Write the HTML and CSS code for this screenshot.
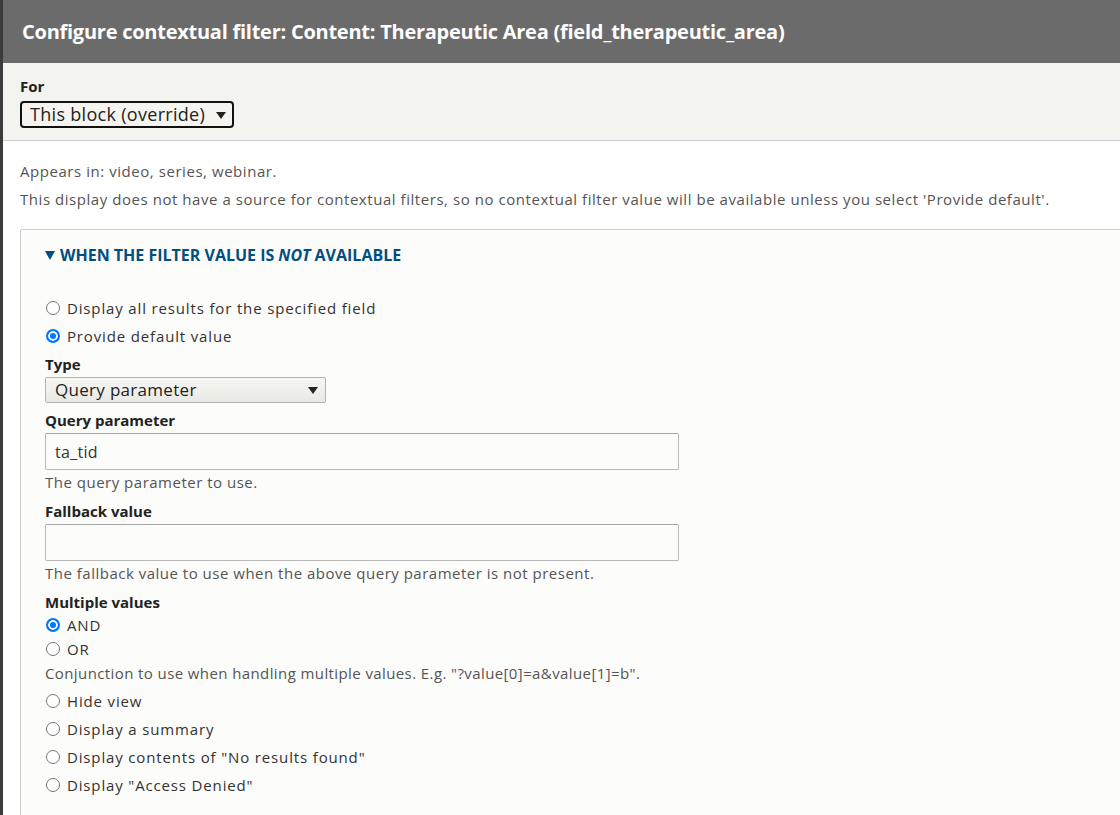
FILE: index.html
```html
<!DOCTYPE html>
<html lang="en">
<head>
<meta charset="utf-8">
<title>Configure contextual filter</title>
<link rel="stylesheet" href="styles.css">
</head>
<body>
<div class="dialog">
  <header class="titlebar">
    <h1 class="title">Configure contextual filter: Content: Therapeutic Area (field_therapeutic_area)</h1>
  </header>
  <div class="for-bar">
    <label class="label" for="override">For</label>
    <div class="select-wrap select-for">
      <select id="override" class="select select-dark"><option>This block (override)</option></select>
      <span class="caret"></span>
    </div>
  </div>
  <div class="content">
    <p class="text">Appears in: video, series, webinar.</p>
    <p class="text text-second">This display does not have a source for contextual filters, so no contextual filter value will be available unless you select 'Provide default'.</p>
    <div class="details">
      <div class="summary"><span class="summary-caret"></span>WHEN THE FILTER VALUE IS <em>NOT</em> AVAILABLE</div>
      <div class="details-body">
        <label class="radio-row"><input type="radio" name="default" class="radio"> Display all results for the specified field</label>
        <label class="radio-row"><input type="radio" name="default" class="radio" checked> Provide default value</label>
        <div class="field">
          <label class="label" for="type">Type</label>
          <div class="select-wrap select-type">
            <select id="type" class="select select-light"><option>Query parameter</option></select>
            <span class="caret"></span>
          </div>
        </div>
        <div class="field field-input">
          <label class="label" for="qp">Query parameter</label>
          <input id="qp" class="input" type="text" value="ta_tid">
          <div class="desc">The query parameter to use.</div>
        </div>
        <div class="field field-input field-fallback">
          <label class="label" for="fb">Fallback value</label>
          <input id="fb" class="input" type="text" value="">
          <div class="desc">The fallback value to use when the above query parameter is not present.</div>
        </div>
        <div class="field field-multi">
          <div class="label">Multiple values</div>
          <label class="radio-row radio-row-small"><input type="radio" name="multi" class="radio" checked> AND</label>
          <label class="radio-row radio-row-small"><input type="radio" name="multi" class="radio"> OR</label>
          <div class="desc desc-conj">Conjunction to use when handling multiple values. E.g. "?value[0]=a&amp;value[1]=b".</div>
        </div>
        <div class="actions">
          <label class="radio-row"><input type="radio" name="action" class="radio"> Hide view</label>
          <label class="radio-row"><input type="radio" name="action" class="radio"> Display a summary</label>
          <label class="radio-row"><input type="radio" name="action" class="radio"> Display contents of "No results found"</label>
          <label class="radio-row"><input type="radio" name="action" class="radio"> Display "Access Denied"</label>
        </div>
      </div>
    </div>
  </div>
</div>
</body>
</html>
```

FILE: styles.css
```css
html, body {
  margin: 0;
  padding: 0;
  height: 100%;
  overflow: hidden;
}
body {
  background: #3b3b3b;
  font-family: "Open Sans", "DejaVu Sans", sans-serif;
  font-size: 15px;
  color: #555;
}
.dialog {
  margin-left: 3px;
  height: 100%;
  background: #fff;
  overflow: hidden;
}
.titlebar {
  height: 63px;
  background: #6b6b6b;
  display: flex;
  align-items: center;
  padding-left: 19px;
}
.title {
  margin: 0;
  color: #fff;
  font-size: 20px;
  font-weight: 700;
  letter-spacing: -0.25px;
}
.for-bar {
  background: #f3f3ef;
  border-bottom: 1px solid #cfcfcf;
  padding: 13px 0 12px 17px;
}
.label {
  display: block;
  font-weight: 700;
  font-size: 15px;
  line-height: 20px;
  color: #222;
}
.for-bar .label {
  margin-bottom: 5px;
}
.select-wrap {
  position: relative;
}
.select {
  appearance: none;
  -webkit-appearance: none;
  font-family: inherit;
  margin: 0;
  display: block;
  width: 100%;
  box-sizing: border-box;
  cursor: pointer;
}
.select-for {
  width: 214px;
}
.select-dark {
  height: 27px;
  border: 2px solid #111;
  border-radius: 4px;
  background: #f5f4ef;
  color: #222;
  font-size: 18px;
  letter-spacing: 0.3px;
  padding: 0 0 0 8px;
  line-height: 23px;
}
.select-type {
  width: 281px;
}
.select-light {
  height: 26px;
  border: 1px solid #b3b3b3;
  border-radius: 2px;
  background: linear-gradient(#f6f6f3, #e9e9e4);
  color: #222;
  font-size: 17px;
  letter-spacing: 0.3px;
  padding: 0 0 0 9px;
  line-height: 24px;
}
.caret {
  position: absolute;
  top: 50%;
  right: 8px;
  margin-top: -3px;
  width: 0;
  height: 0;
  border-left: 5px solid transparent;
  border-right: 5px solid transparent;
  border-top: 7px solid #222;
  pointer-events: none;
}
.select-type .caret {
  right: 8px;
}
.content {
  padding: 20px 0 0 17px;
}
.text {
  margin: 0;
  line-height: 20px;
  font-size: 15px;
  letter-spacing: 0.55px;
  color: #555;
}
.text-second {
  margin-top: 8px;
}
.details {
  margin-top: 20px;
  margin-right: -40px;
  border: 1px solid #cccccc;
  border-radius: 2px;
  background: #fcfcfa;
  min-height: 700px;
}
.summary {
  padding: 15px 0 0 24px;
  line-height: 20px;
  font-size: 16px;
  font-weight: 700;
  color: #004f80;
  display: flex;
  align-items: center;
}
.summary em {
  font-style: italic;
  margin: 0 4px;
}
.summary-caret {
  width: 0;
  height: 0;
  border-left: 5px solid transparent;
  border-right: 5px solid transparent;
  border-top: 9px solid #004f80;
  margin-right: 5px;
}
.details-body {
  padding: 29px 0 0 24px;
}
.radio-row {
  display: flex;
  align-items: center;
  height: 28px;
  color: #333;
  font-size: 15px;
  letter-spacing: 0.85px;
}
.radio-row-small {
  height: 24px;
}
.radio {
  appearance: none;
  -webkit-appearance: none;
  box-sizing: border-box;
  width: 14px;
  height: 14px;
  margin: 0 7px 0 1px;
  border: 1px solid #767676;
  border-radius: 50%;
  background: #fff;
  flex: none;
}
.radio:checked {
  border: 2px solid #0075ff;
  background: #0075ff;
  box-shadow: inset 0 0 0 2px #fff;
}
.field .label {
  margin-top: 4px;
}
.field-input .label {
  margin-top: 7px;
}
.select-type {
  margin-top: 3px;
}
.input {
  display: block;
  box-sizing: border-box;
  width: 634px;
  height: 37px;
  margin: 3px 0 0 0;
  border: 1px solid #b8b8b8;
  border-top-color: #a5a5a5;
  border-radius: 2px;
  background: #fcfcfa;
  font-family: inherit;
  font-size: 16px;
  letter-spacing: 0.3px;
  color: #333;
  padding: 0 9px;
}
.desc {
  margin-top: 2px;
  line-height: 20px;
  font-size: 15px;
  color: #555;
  letter-spacing: 0.5px;
}
.field-fallback .label {
  margin-top: 9px;
}
.field-multi .label {
  margin-top: 9px;
  margin-bottom: 1px;
}
.desc-conj {
  margin-top: 2px;
  letter-spacing: 0.4px;
}
.actions {
  margin-top: 4px;
}
```
